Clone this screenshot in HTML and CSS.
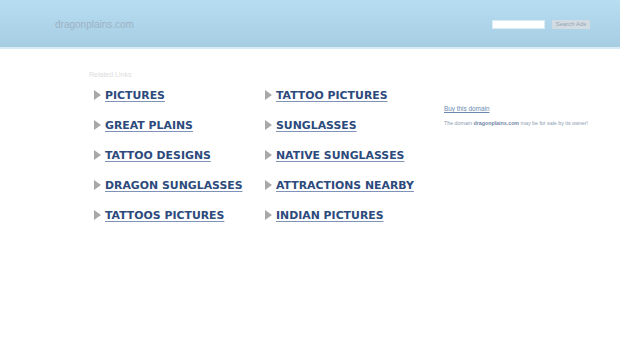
FILE: index.html
```html
<!DOCTYPE html>
<html lang="en">
<head>
  <meta charset="UTF-8" />
  <title>dragonplains.com</title>
  <link rel="stylesheet" href="styles.css">
</head>
<body>
  <div class="header">
    <div class="logo">dragonplains.com</div>
    <form class="search">
      <input type="text" class="search-box">
      <button type="button" class="search-btn">Search Ads</button>
    </form>
  </div>

  <div class="content">
    <div class="related">
      <div class="related-title">Related Links</div>
      <ul class="links">
        <li><span class="arrow"></span><a href="#">PICTURES</a></li>
        <li><span class="arrow"></span><a href="#">TATTOO PICTURES</a></li>
        <li><span class="arrow"></span><a href="#">GREAT PLAINS</a></li>
        <li><span class="arrow"></span><a href="#">SUNGLASSES</a></li>
        <li><span class="arrow"></span><a href="#">TATTOO DESIGNS</a></li>
        <li><span class="arrow"></span><a href="#">NATIVE SUNGLASSES</a></li>
        <li><span class="arrow"></span><a href="#">DRAGON SUNGLASSES</a></li>
        <li><span class="arrow"></span><a href="#">ATTRACTIONS NEARBY</a></li>
        <li><span class="arrow"></span><a href="#">TATTOOS PICTURES</a></li>
        <li><span class="arrow"></span><a href="#">INDIAN PICTURES</a></li>
      </ul>
    </div>
    <div class="sidebar">
      <a href="#" class="buy">Buy this domain</a>
      <p class="sale">The domain <b>dragonplains.com</b> may be for sale by its owner!</p>
    </div>
  </div>
</body>
</html>
```

FILE: styles.css
```css
body {
  margin: 0;
  font-family: 'Liberation Sans', Arial, sans-serif;
  background: #fff;
}
.header {
  height: 47px;
  background: linear-gradient(#b7ddf1, #a7cde3);
  border-bottom: 2px solid #d6ebf6;
  display: flex;
  align-items: center;
  justify-content: space-between;
  padding: 0 30px 0 55px;
}
.logo {
  font-size: 10px;
  color: #9db2c4;
  margin-top: 1px;
}
.search {
  display: flex;
  gap: 7px;
  margin: 2px 0 0 0;
}
.search-box {
  width: 53px;
  height: 9px;
  box-sizing: border-box;
  border: 1px solid #d8ecf6;
  background: #fff;
  padding: 0;
  margin: 0;
}
.search-btn {
  width: 38px;
  height: 9px;
  box-sizing: border-box;
  border: none;
  background: #d3dbe2;
  color: #93a7b7;
  font-family: 'Liberation Sans', Arial, sans-serif;
  font-size: 6px;
  padding: 0;
  line-height: 9px;
}
.content {
  display: flex;
  padding-top: 21px;
}
.related {
  width: 355px;
  padding-left: 89px;
}
.related-title {
  font-size: 7px;
  color: #dcdcdc;
  height: 10px;
  line-height: 10px;
}
.links {
  list-style: none;
  margin: 0;
  padding: 5px 0 0 5px;
  display: grid;
  grid-template-columns: 171px 171px;
  grid-auto-rows: 30px;
}
.links li {
  display: flex;
  align-items: center;
  height: 20px;
}
.arrow {
  width: 0;
  height: 0;
  border-top: 5px solid transparent;
  border-bottom: 5px solid transparent;
  border-left: 7px solid #a8a8a8;
  margin-right: 4px;
}
.links a {
  font-family: 'DejaVu Sans', Verdana, sans-serif;
  font-weight: bold;
  font-size: 10.9px;
  color: #2d4a7c;
  text-decoration: underline;
  text-decoration-color: #7f93b8;
  text-underline-offset: 2px;
}
.sidebar {
  padding-top: 27px;
}
.buy {
  font-size: 6.4px;
  color: #6b89b0;
  text-decoration: underline;
}
.sale {
  margin: 5px 0 0;
  font-size: 5.3px;
  color: #8b9cb2;
}
.sale b {
  color: #7388a6;
}
```
